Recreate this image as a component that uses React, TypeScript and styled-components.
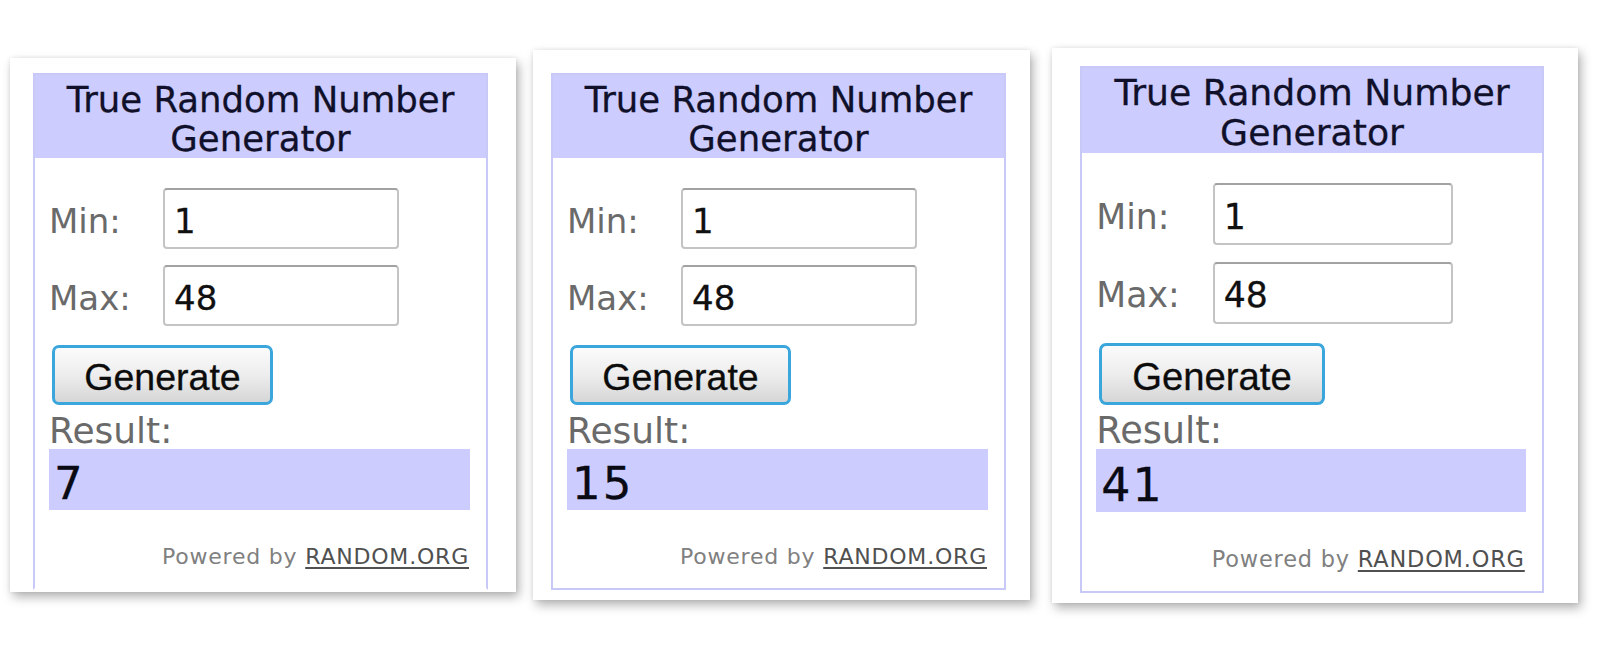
import styled, { createGlobalStyle } from "styled-components";

const GlobalStyle = createGlobalStyle`
  body {
    margin: 0;
    background: #ffffff;
    font-family: "DejaVu Sans", Verdana, sans-serif;
  }
`;

const Page = styled.div`
  display: flex;
  align-items: flex-start;
  padding-left: 10px;
  height: 645px;
  box-sizing: border-box;
`;

type CardProps = {
  $top: number;
  $left: number;
  $pad: string;
};

const Card = styled.div<CardProps>`
  margin-top: ${(p) => p.$top}px;
  margin-left: ${(p) => p.$left}px;
  padding: ${(p) => p.$pad};
  background: #ffffff;
  box-shadow: 3px 5px 10px rgba(0, 0, 0, 0.3), 0 0 4px rgba(0, 0, 0, 0.08);
`;

const Panel = styled.div<{ $zoom: number; $open?: boolean }>`
  zoom: ${(p) => p.$zoom};
  width: 455px;
  height: 517px;
  box-sizing: border-box;
  border: 2px solid #c9c9f7;
  border-bottom-color: ${(p) => (p.$open ? "transparent" : "#c9c9f7")};
  background: #ffffff;
  display: flex;
  flex-direction: column;
`;

const Header = styled.div`
  height: 83px;
  box-sizing: border-box;
  padding-top: 5px;
  background: #ccccff;
  text-align: center;
  font-size: 35.5px;
  line-height: 39px;
  color: #10102a;
  -webkit-text-stroke: 0.3px #10102a;
`;

const Body = styled.div`
  display: flex;
  flex-direction: column;
  padding: 30px 16px 0 14px;
`;

const FieldRow = styled.div`
  display: grid;
  grid-template-columns: 114px 236px;
  align-items: center;
  height: 61px;
  & + & {
    margin-top: 16px;
  }
`;

const Label = styled.span`
  font-size: 34px;
  color: #6a6a6a;
  padding-top: 5px;
`;

const NumberInput = styled.div`
  height: 61px;
  box-sizing: border-box;
  border: 2px solid #c4c4c4;
  border-top-color: #a2a2a2;
  border-radius: 4px;
  background: #ffffff;
  padding: 5px 0 0 9px;
  display: flex;
  align-items: center;
  font-size: 34px;
  color: #101010;
  -webkit-text-stroke: 0.3px #101010;
`;

const GenerateButton = styled.button`
  margin: 19px 0 0 3px;
  width: 221px;
  height: 60px;
  box-sizing: border-box;
  border: 3px solid #3aa6dc;
  border-radius: 7px;
  background: linear-gradient(#fbfbfb 0%, #ededed 50%, #d6d6d6 100%);
  font-family: "Liberation Sans", Arial, sans-serif;
  font-size: 37.5px;
  color: #0c0c0c;
  -webkit-text-stroke: 0.3px #0c0c0c;
  padding: 5px 0 0;
`;

const ResultLabel = styled.div`
  margin-top: 4px;
  padding-top: 3px;
  line-height: 37px;
  font-size: 36px;
  color: #6a6a6a;
`;

const ResultBox = styled.div`
  height: 61px;
  box-sizing: border-box;
  padding: 8px 0 0 5px;
  background: #ccccff;
  font-size: 45px;
  line-height: 53px;
  letter-spacing: 2px;
  color: #0a0a14;
  -webkit-text-stroke: 0.3px #0a0a14;
`;

const Powered = styled.div`
  margin-top: 32px;
  padding-right: 1px;
  text-align: right;
  font-size: 22px;
  line-height: 30px;
  letter-spacing: 0.8px;
  color: #808080;
`;

const PoweredLink = styled.span`
  color: #505050;
  text-decoration: underline;
  text-decoration-thickness: 2px;
  text-underline-offset: 3px;
`;

type GeneratorProps = {
  result: string;
  zoom?: number;
  open?: boolean;
};

const Generator = ({ result, zoom = 1, open }: GeneratorProps) => (
  <Panel $zoom={zoom} $open={open}>
    <Header>
      True Random Number
      <br />
      Generator
    </Header>
    <Body>
      <FieldRow>
        <Label>Min:</Label>
        <NumberInput>1</NumberInput>
      </FieldRow>
      <FieldRow>
        <Label>Max:</Label>
        <NumberInput>48</NumberInput>
      </FieldRow>
      <div>
        <GenerateButton>Generate</GenerateButton>
      </div>
      <ResultLabel>Result:</ResultLabel>
      <ResultBox>{result}</ResultBox>
      <Powered>
        Powered by <PoweredLink>RANDOM.ORG</PoweredLink>
      </Powered>
    </Body>
  </Panel>
);

const App = () => {
  return (
    <>
      <GlobalStyle />
      <Page>
        <Card $top={58} $left={0} $pad="15px 28px 2px 23px">
          <Generator result="7" open />
        </Card>
        <Card $top={50} $left={17} $pad="23px 24px 10px 18px">
          <Generator result="15" />
        </Card>
        <Card $top={48} $left={22} $pad="18px 34px 10px 28px">
          <Generator result="41" zoom={1.02} />
        </Card>
      </Page>
    </>
  );
};

export default App;
